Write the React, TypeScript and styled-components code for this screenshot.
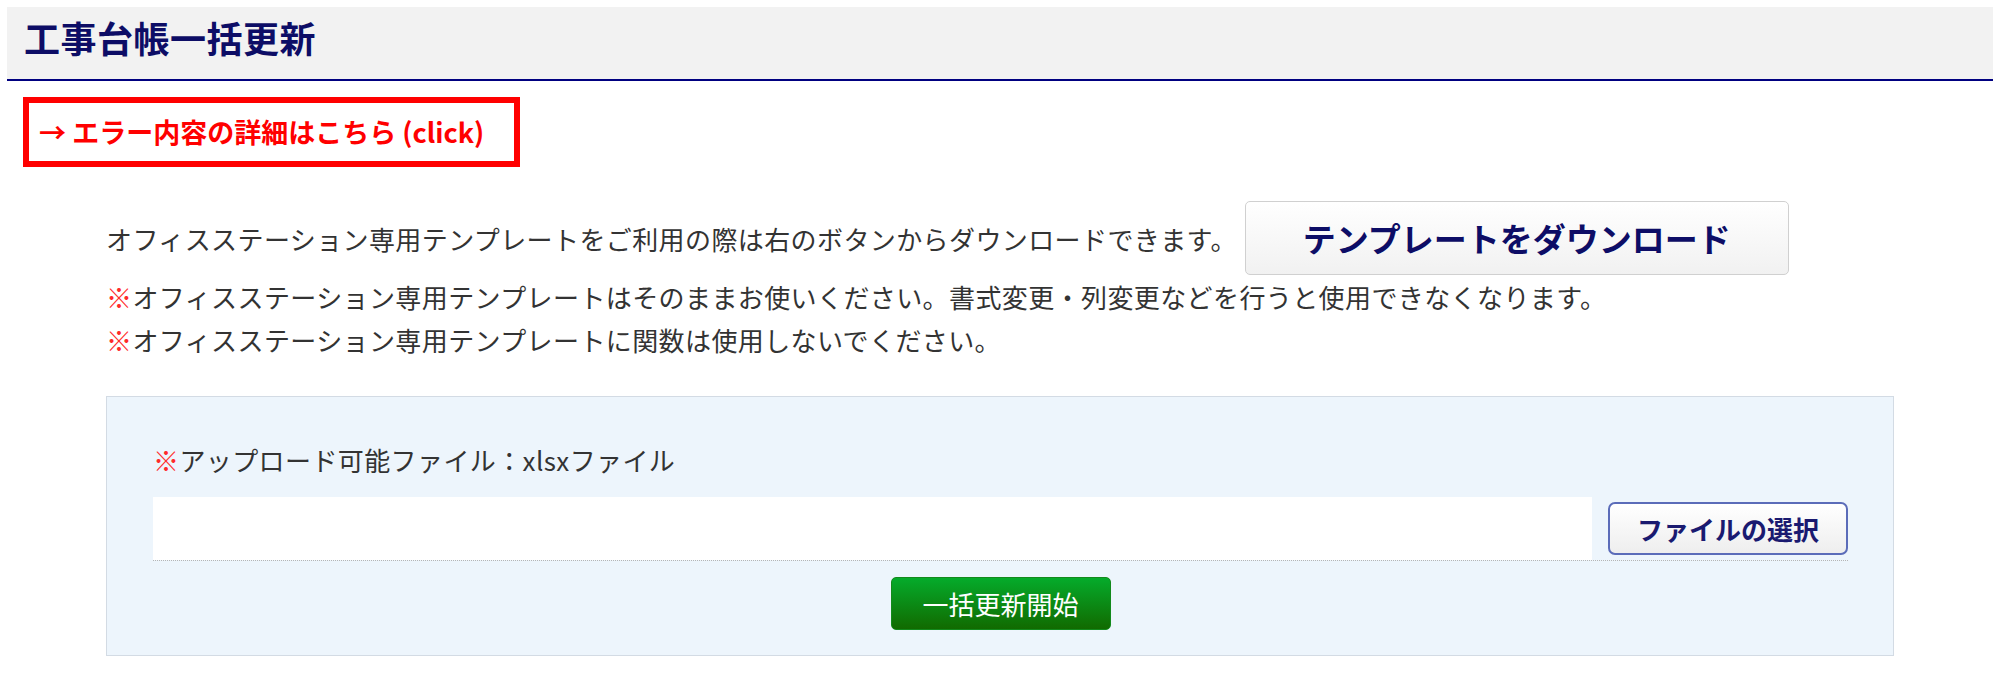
import React from "react";
import styled, {createGlobalStyle} from "styled-components";

const GlobalStyle = createGlobalStyle`
  body {
    margin: 0;
    background: #fff;
    color: #333;
    font-family: "Noto Sans CJK JP", "Noto Sans", sans-serif;
  }
`

const Page = styled.div`
  padding: 7px 7px 0;
`

const Header = styled.header`
  height: 60px;
  padding: 12px 17px 0;
  background-color: #f2f2f2;
  border-bottom: 2px solid #000080;
`

const Title = styled.h1`
  margin: 0;
  font-size: 36px;
  line-height: 36px;
  font-weight: 700;
  letter-spacing: 0.5px;
  color: #0d0d66;
`

const ErrorLink = styled.a`
  display: block;
  width: fit-content;
  height: 58px;
  margin: 16px 0 0 16px;
  padding: 0 30px 0 10px;
  border: 6px solid #ff0000;
  font-size: 27px;
  line-height: 58px;
  font-weight: 700;
  color: #ff0000;
  text-decoration: none;
  cursor: pointer;
`

const Section = styled.section`
  margin-top: 34px;
  padding: 0 99px;
`

const Row = styled.div`
  display: flex;
  align-items: center;
  gap: 8px;
`

const Text = styled.p`
  margin: 0;
  font-size: 26px;
  line-height: 43px;
  letter-spacing: 0.4px;
`

const Mark = styled.span`
  color: #ff2a2a;
`

const DownloadButton = styled.button`
  width: 544px;
  height: 74px;
  border: 1px solid #d0d0d0;
  border-radius: 5px;
  background: linear-gradient(#ffffff, #f1f1f1);
  font-family: inherit;
  font-size: 33px;
  font-weight: 700;
  color: #0d0d66;
  cursor: pointer;
`

const Panel = styled.div`
  margin-top: 35px;
  padding: 41px 45px 25px 46px;
  background-color: #edf5fc;
  border: 1px solid #d3dbe4;
`

const UploadRow = styled.div`
  display: flex;
  align-items: center;
  gap: 16px;
  margin-top: 16px;
  border-bottom: 1px dotted #b5b5b5;
`

const FileField = styled.div`
  flex: 1;
  height: 63px;
  background-color: #fff;
`

const SelectButton = styled.button`
  width: 240px;
  height: 53px;
  border: 2px solid #5b6cb9;
  border-radius: 7px;
  background: linear-gradient(#ffffff, #eeeeee);
  font-family: inherit;
  font-size: 26px;
  font-weight: 700;
  color: #1a1a70;
  cursor: pointer;
`

const StartRow = styled.div`
  display: flex;
  justify-content: center;
  margin-top: 16px;
`

const StartButton = styled.button`
  width: 220px;
  height: 53px;
  border: 1px solid #138a1c;
  border-radius: 5px;
  background: linear-gradient(#05ab2b, #116a00);
  font-family: inherit;
  font-size: 26px;
  color: #fff;
  cursor: pointer;
`

const App = () => {
    return (
        <Page>
            <GlobalStyle/>
            <Header>
                <Title>工事台帳一括更新</Title>
            </Header>
            <ErrorLink>→ エラー内容の詳細はこちら (click)</ErrorLink>
            <Section>
                <Row>
                    <Text>オフィスステーション専用テンプレートをご利用の際は右のボタンからダウンロードできます。</Text>
                    <DownloadButton>テンプレートをダウンロード</DownloadButton>
                </Row>
                <Text><Mark>※</Mark>オフィスステーション専用テンプレートはそのままお使いください。書式変更・列変更などを行うと使用できなくなります。</Text>
                <Text><Mark>※</Mark>オフィスステーション専用テンプレートに関数は使用しないでください。</Text>
                <Panel>
                    <Text><Mark>※</Mark>アップロード可能ファイル：xlsxファイル</Text>
                    <UploadRow>
                        <FileField/>
                        <SelectButton>ファイルの選択</SelectButton>
                    </UploadRow>
                    <StartRow>
                        <StartButton>一括更新開始</StartButton>
                    </StartRow>
                </Panel>
            </Section>
        </Page>
    )
}

export default App
